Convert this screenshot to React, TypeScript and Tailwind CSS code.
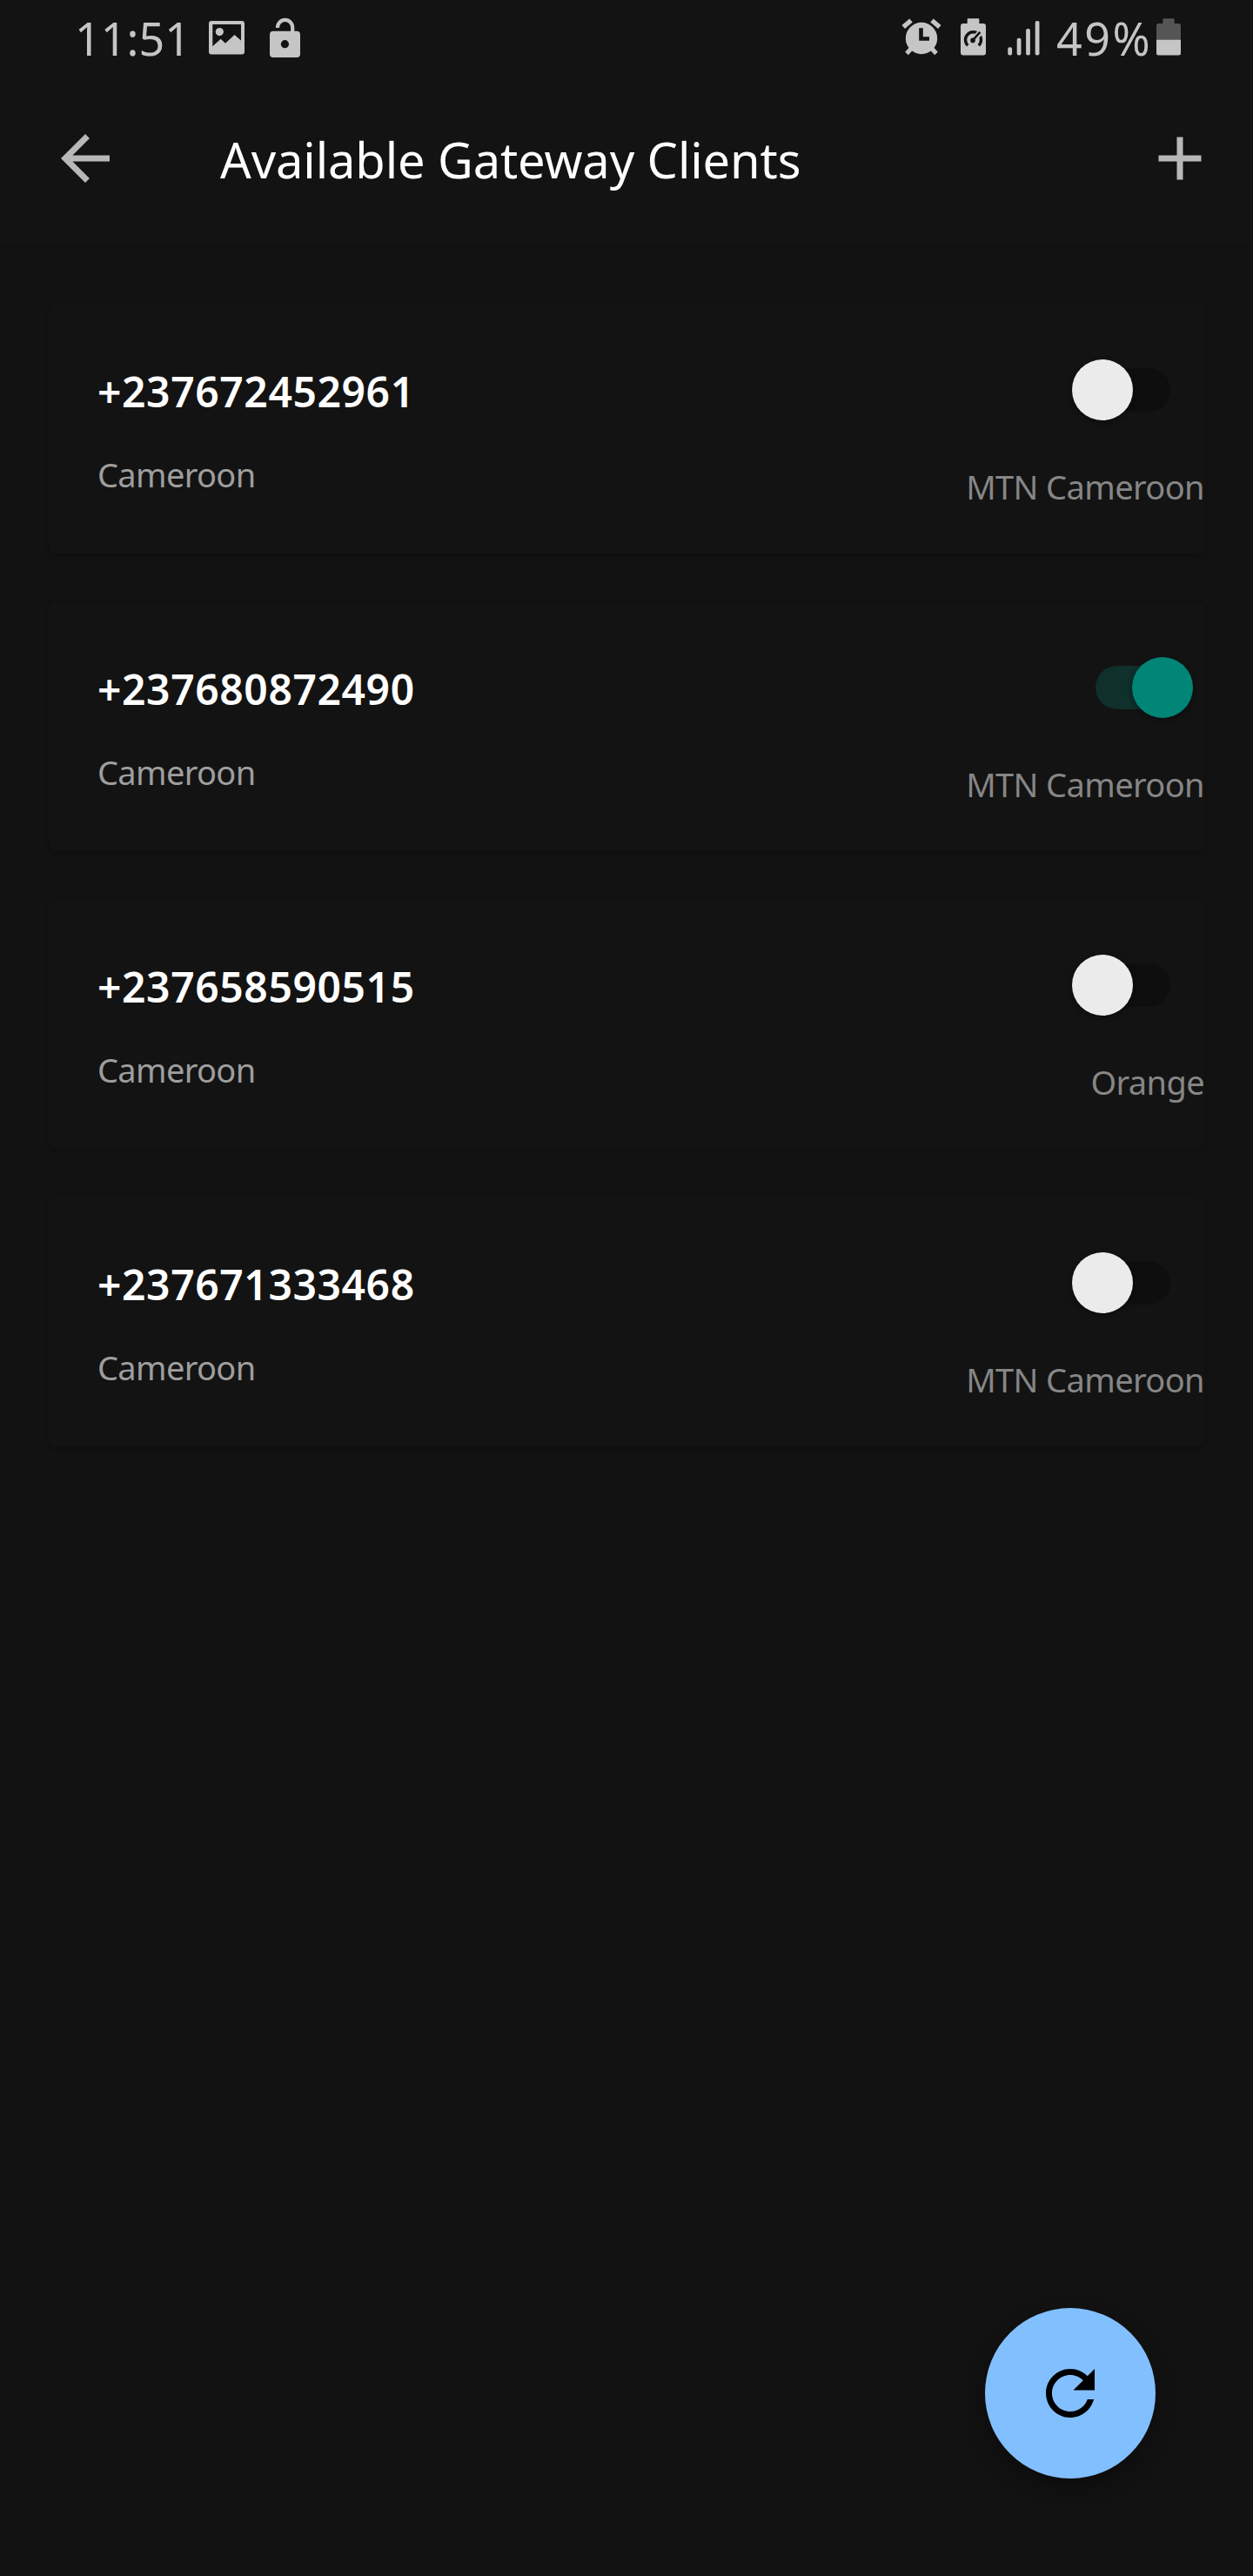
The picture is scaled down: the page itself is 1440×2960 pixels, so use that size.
type Client = { number: string; country: string; operator: string; on: boolean };

const clients: Client[] = [
  { number: "+237672452961", country: "Cameroon", operator: "MTN Cameroon", on: false },
  { number: "+237680872490", country: "Cameroon", operator: "MTN Cameroon", on: true },
  { number: "+237658590515", country: "Cameroon", operator: "Orange", on: false },
  { number: "+237671333468", country: "Cameroon", operator: "MTN Cameroon", on: false },
];

function PictureIcon() {
  return (
    <svg width="41" height="84" viewBox="0 0 41 84" fill="#c5c5c5">
      <path
        fillRule="evenodd"
        d="M3 24H38Q41 24 41 27V59.500Q41 62.500 38 62.500H3Q0 62.500 0 59.500V27Q0 24 3 24ZM4.300 28V53.300L13.700 44.700L19 49.800L29.500 40L37 46.500V28Z"
      />
      <circle cx="12.300" cy="36.600" r="4.600" />
    </svg>
  );
}

function UnlockIcon() {
  return (
    <svg width="35" height="84" viewBox="0 0 35 84" fill="none">
      <path d="M9 32V31.500A8.600 8.600 0 0 1 26.200 31.500V38" stroke="#c5c5c5" strokeWidth="4.200" />
      <rect y="35.700" width="35" height="30.300" rx="4" fill="#c5c5c5" />
      <circle cx="17.400" cy="50.700" r="4.600" fill="#131313" />
    </svg>
  );
}

function AlarmIcon() {
  return (
    <svg width="46" height="84" viewBox="0 0 46 84" fill="none" stroke="#c5c5c5">
      <circle cx="23" cy="44" r="18.200" fill="#c5c5c5" stroke="none" />
      <path d="M2.200 31L11 23.500M43.800 31L35 23.500" strokeWidth="5.400" />
      <path d="M11 56L6 61.500M35 56L40 61.500" strokeWidth="5" />
      <path d="M22.500 32.300V44.500H32" stroke="#131313" strokeWidth="4.600" />
    </svg>
  );
}

function BatterySaverIcon() {
  return (
    <svg width="29" height="84" viewBox="0 0 29 84" fill="none">
      <path
        d="M8.500 21.300H20.500Q21.300 21.300 21.300 22.200V27H26Q29 27 29 30V60.500Q29 63.500 26 63.500H3Q0 63.500 0 60.500V30Q0 27 3 27H7.700V22.200Q7.700 21.300 8.500 21.300Z"
        fill="#c5c5c5"
      />
      <path d="M8.200 52.200A9 9 0 1 1 20.800 52.200" stroke="#131313" strokeWidth="3.400" />
      <path d="M14.500 46L25 34.500" stroke="#c5c5c5" strokeWidth="6.600" />
      <path d="M13.800 46.500L22.300 36.800" stroke="#131313" strokeWidth="2.600" />
      <circle cx="14" cy="46.400" r="2.800" fill="#131313" />
      <path d="M10.500 53.500L14.500 49.500L18.500 53.500Z" fill="#c5c5c5" />
    </svg>
  );
}

function SignalIcon() {
  return (
    <svg width="37" height="84" viewBox="0 0 37 84" fill="#c5c5c5">
      <rect x="0.300" y="54.300" width="4.800" height="9.200" rx="2" />
      <rect x="10.700" y="43.700" width="4.800" height="19.800" rx="2" />
      <rect x="21.100" y="33" width="4.800" height="30.500" rx="2" />
      <rect x="31.700" y="24" width="4.800" height="39.500" rx="2" />
    </svg>
  );
}

function BatteryIcon() {
  return (
    <svg width="28" height="84" viewBox="0 0 28 84">
      <path
        d="M8.200 21.300H19.800Q20.600 21.300 20.600 22.200V27H25.500Q28 27 28 29.500V46H0V29.500Q0 27 2.500 27H7.400V22.200Q7.400 21.300 8.200 21.300Z"
        fill="#555555"
      />
      <path d="M0 45.800H28V61Q28 63.500 25.500 63.500H2.500Q0 63.500 0 61Z" fill="#c5c5c5" />
    </svg>
  );
}

function StatusBar() {
  return (
    <div className="flex h-[84px] items-start bg-[#131313] pr-[83px] pl-[86px] text-[52px] leading-[87px] text-[#c5c5c5]">
      <span className="w-[154px] shrink-0">11:51</span>
      <PictureIcon />
      <div className="ml-[29px]">
        <UnlockIcon />
      </div>
      <div className="ml-auto flex items-start">
        <AlarmIcon />
        <div className="ml-[22px]">
          <BatterySaverIcon />
        </div>
        <div className="ml-[25px]">
          <SignalIcon />
        </div>
        <span className="ml-[19px] w-[115px] shrink-0 tracking-[2.5px]">49%</span>
        <BatteryIcon />
      </div>
    </div>
  );
}

function AppBar() {
  return (
    <header className="flex h-[196px] items-center bg-[#131313] pr-[42px] pl-14 shadow-[0_1px_3px_rgba(0,0,0,0.15)]">
      <button aria-label="Back">
        <svg width="84" height="84" viewBox="0 0 24 24" fill="#b8b8b8">
          <path d="M20 11H7.830l5.590-5.590L12 4l-8 8 8 8 1.410-1.410L7.830 13H20v-2z" />
        </svg>
      </button>
      <h1 className="ml-[113px] pt-0.5 text-[56px] leading-[76px] font-normal tracking-[-0.1px] whitespace-nowrap">
        Available Gateway Clients
      </h1>
      <button aria-label="Add" className="ml-auto">
        <svg width="84" height="84" viewBox="0 0 24 24" fill="#b8b8b8">
          <path d="M19 13h-6v6h-2v-6H5v-2h6V5h2v6h6v2z" />
        </svg>
      </button>
    </header>
  );
}

function Toggle({ on }: { on: boolean }) {
  return on ? (
    <div className="mr-[13px] flex h-[70px] w-[112px] items-center">
      <div className="h-[50px] w-[92px] shrink-0 rounded-full bg-[#0f302b]" />
      <div className="-ml-[50px] size-[70px] shrink-0 rounded-full bg-[#008577] shadow-[0_2px_6px_rgba(0,0,0,0.4)]" />
    </div>
  ) : (
    <div className="mr-[39px] flex h-[70px] w-[113px] flex-row-reverse items-center">
      <div className="h-[50px] w-[92px] shrink-0 rounded-full bg-[#0e0e0e]" />
      <div className="relative -mr-[49px] size-[70px] shrink-0 rounded-full bg-[#ebebeb] shadow-[0_2px_6px_rgba(0,0,0,0.4)]" />
    </div>
  );
}

function ClientCard({ client }: { client: Client }) {
  return (
    <li className="flex h-[286px] justify-between rounded-lg bg-[#131313] pl-14 shadow-[0_2px_6px_rgba(0,0,0,0.22)]">
      <div className="pt-[72px]">
        <p className="text-[48px] leading-[56px] font-semibold tracking-[0.6px]">{client.number}</p>
        <p className="mt-[43px] text-[38px] leading-[48px] tracking-[-0.65px] text-[#9e9e9e]">{client.country}</p>
      </div>
      <div className="flex flex-col items-end pt-[63px]">
        <Toggle on={client.on} />
        <p className="mt-[52px] text-[38px] leading-[48px] tracking-[-0.6px] text-[#868686]">{client.operator}</p>
      </div>
    </li>
  );
}

export default function App() {
  return (
    <div className="relative h-[2960px] w-[1440px] overflow-hidden bg-[#121212] font-['Noto_Sans',sans-serif] text-white">
      <StatusBar />
      <AppBar />
      <ul className="flex flex-col gap-14 px-14 pt-[70px]">
        {clients.map((client) => (
          <ClientCard key={client.number} client={client} />
        ))}
      </ul>
      <button
        aria-label="Refresh"
        className="absolute right-28 bottom-28 flex size-[196px] items-center justify-center rounded-full bg-[#82bfff] shadow-[0_10px_24px_rgba(0,0,0,0.35)]"
      >
        <svg width="84" height="84" viewBox="0 0 24 24" fill="#000000">
          <path d="M17.650 6.350C16.200 4.900 14.210 4 12 4c-4.420 0-7.990 3.580-7.990 8s3.570 8 7.990 8c3.730 0 6.840-2.550 7.730-6h-2.080c-.820 2.330-3.040 4-5.650 4-3.310 0-6-2.690-6-6s2.690-6 6-6c1.660 0 3.140.690 4.220 1.780L13 11h7V4l-2.350 2.350z" />
        </svg>
      </button>
    </div>
  );
}
